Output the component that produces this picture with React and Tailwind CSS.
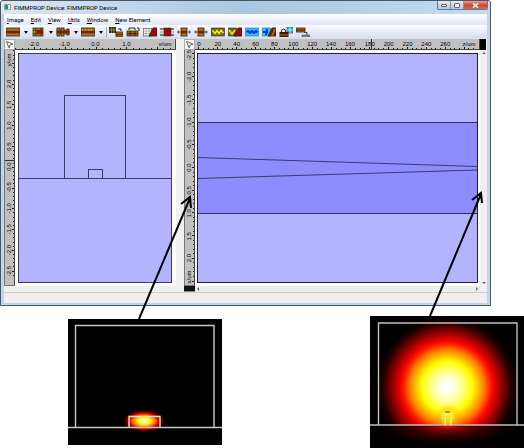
import { MousePointer2 } from "lucide-react";

const MENU = ["Image", "Edit", "View", "Utils", "Window", "New Element"];

const OLIVE = "#8a8418";
const DARK = "#2c2a08";
const WINE = "#980c10";

function Guide({ x = 0, y = 1, w = 14, h = 8 }) {
    return (
        <g>
            <rect x={x} y={y} width={w} height={h} fill={OLIVE} stroke={DARK} strokeWidth="0.8" />
            <rect x={x} y={y + h * 0.35} width={w} height={h * 0.32} fill={WINE} />
        </g>
    );
}

function Wedge({ x = 7 }) {
    return <path d={`M${x} 9 L${x + 4} 1 H14 V9 Z`} fill={WINE} stroke={DARK} strokeWidth="0.9" />;
}

const WITH_MENU = [
    { name: "Straight section", art: <Guide /> },
    {
        name: "Joint",
        art: <g><Guide x={2} w={10} /><path d="M2 5 H6" stroke="#f0e040" /><rect x="6" y="3" width="5" height="4" fill={WINE} /><path d="M10 1 V3 M10 7 V9 M5 2 V8" stroke={DARK} /></g>,
    },
    {
        name: "Periodic section",
        art: <g><Guide x={1} y={3} w={12} h={4} /><Guide x={1} w={3} /><Guide x={5} w={3} /><Guide x={11} y={2} w={2} h={6} /><path d="M1 5 H13" stroke={WINE} strokeWidth="1.6" /></g>,
    },
    {
        name: "Planar section",
        art: <g><Guide /><path d="M1 3 H13" stroke="#f0e040" strokeDasharray="1 2" /></g>,
    },
];

const TOOLS = [
    {
        name: "Copy element",
        art: <g><path d="M0 0 H7 V6 H0 Z" fill={DARK} /><path d="M2.3 0 V6 M4.7 0 V6 M0 3 H7" stroke="#b8ae30" strokeWidth="0.7" /><path d="M9 2 H12 V4" stroke="#222" fill="none" /><Guide x={7} y={5} w={7} h={5} /></g>,
    },
    {
        name: "Swap elements",
        art: <g><Guide x={1} y={4} w={11} h={5} /><path d="M3 3 V1 H9 V3 M11 1 H13 V4" stroke="#222" fill="none" /><path d="M4 4 V9 M9 4 V9" stroke={DARK} /></g>,
    },
    {
        name: "Mesh taper",
        art: <g><rect x="0.5" y="1.5" width="8" height="7.5" fill="#fff" stroke="#555" strokeWidth="0.7" /><path d="M3 1 V9 M6 1 V9 M0 4 H8 M0 6.5 H8" stroke="#888" strokeWidth="0.6" /><Wedge x={6} /></g>,
    },
    {
        name: "Scattering matrix",
        art: <g><rect x="4" y="1" width="7" height="8" fill={WINE} stroke={DARK} strokeWidth="0.6" /><path d="M0 2 H4 M0 8 H4 M11 2 H14 M11 8 H14" stroke="#222" /><path d="M1.5 1 V3 M1.5 7 V9 M12.5 1 V3 M12.5 7 V9 M0 5 H3 M12 5 H14" stroke="#666" strokeWidth="0.8" /></g>,
    },
    {
        name: "Inputs",
        art: <g><Guide x={4} w={6} /><path d="M0 5 H3 M14 5 H11 M1.5 3.5 V6.5 M12.5 3.5 V6.5" stroke="#444" strokeWidth="0.9" /></g>,
    },
    {
        name: "Outputs",
        art: <g><Guide x={4} w={6} /><path d="M0 5 H4 M10 5 H14 M2 3.5 V6.5 M12 3.5 V6.5" stroke="#444" strokeWidth="0.9" /></g>,
    },
    {
        name: "Field plot",
        art: <g><rect x="0.5" y="1" width="13" height="8" fill="#6f6a10" stroke={DARK} strokeWidth="0.6" /><path d="M1.5 3.5 L4 6.5 L6 3.5 L8 6.5 L10 3.5 L12.5 6" stroke="#f8ec28" strokeWidth="1.5" fill="none" /></g>,
    },
    {
        name: "Field plot of taper",
        art: <g><rect x="0.5" y="1" width="8" height="8" fill="#6f6a10" stroke={DARK} strokeWidth="0.6" /><path d="M1 3 L4 7 L7 3" stroke="#f8ec28" strokeWidth="1.5" fill="none" /><Wedge x={6} /></g>,
    },
    {
        name: "Mode profile",
        art: <g><rect x="0.5" y="1" width="13" height="8" fill="#28c8f0" stroke="#207898" strokeWidth="0.6" /><path d="M1.5 5 L3 4 L5 6 L7 4 L9 6 L11 4 L12.5 5.5" stroke="#1428e0" strokeWidth="2" fill="none" /></g>,
    },
    {
        name: "Mode profile of taper",
        art: <g><rect x="0.5" y="1" width="8" height="8" fill="#28c8f0" stroke="#207898" strokeWidth="0.6" /><path d="M1 5 H6 M5 2 L4 8" stroke="#1428e0" strokeWidth="1.8" /><Wedge x={6} /><path d="M10 9 L13 2" stroke={OLIVE} strokeWidth="1.6" /></g>,
    },
    {
        name: "Lock results",
        art: <g><rect x="8" y="0" width="6" height="6" fill="#28b8c8" stroke="#205860" strokeWidth="0.7" /><path d="M8 3 H14 M11 0 V6" stroke="#fff" strokeWidth="0.6" /><path d="M2.5 5 V3.5 Q4.5 0.5 6.5 3.5 V5" stroke="#333" fill="none" strokeWidth="1.1" /><rect x="0.5" y="5" width="9" height="5" fill="#4a1408" /><path d="M1 8 H9" stroke={OLIVE} /></g>,
    },
    {
        name: "Export device",
        art: <g><Guide x={0} y={1} w={9} h={4} /><path d="M8 5.5 H11 V8" stroke="#444" fill="none" /><rect x="6" y="8" width="8" height="2" fill="#888" stroke="#333" strokeWidth="0.4" /></g>,
    },
];

const LEFT_X = {
    ticks: range(26, 1, 6.2),
    labels: [[19, "-2.0"], [50, "-1.0"], [81, "0.0"], [112, "1.0"], [151, "x/um"]],
};
const LEFT_Y = {
    ticks: range(55, 1, 4.17),
    labels: [[10, "y/um"], [34, "2.0"], [55, "1.5"], [76, "1.0"], [97, "0.5"], [117, "0.0"], [138, "-0.5"], [159, "-1.0"], [180, "-1.5"], [201, "-2.0"], [222, "-2.5"]],
};
const RIGHT_X = {
    ticks: range(59, 4, 4.77),
    labels: [
        [4, "0"], [23, "20"], [42, "40"], [61, "60"], [80, "80"], [99, "100"], [118, "120"], [137, "140"],
        [156, "160"], [176, "180"], [195, "200"], [214, "220"], [233, "240"], [252, "260"], [276, "z/um"],
    ],
};
const RIGHT_Y = {
    ticks: range(51, 4, 4.56),
    labels: [[5, "-2.5"], [27, "-2.0"], [50, "-1.5"], [73, "-1.0"], [95, "-0.5"], [118, "0.0"], [141, "0.5"], [164, "1.0"], [187, "1.5"], [209, "2.0"], [228, "x/um"]],
};

function range(count, start, step) {
    return Array.from({ length: count }, (_, i) => start + i * step);
}

const pct = (v, total) => `${(v / total) * 100}%`;

function HRuler({ scale, length, marker, major }) {
    return (
        <div className="h-[11px] min-w-0 border-r border-b border-[#444] bg-[#c0c0c0]">
            <svg className="block h-full w-full overflow-hidden" fontFamily="Liberation Sans, Arial, sans-serif" fontSize="6">
                {scale.ticks.map((t, i) => (
                    <line key={t} x1={pct(t, length)} x2={pct(t, length)} y1={i % major.every === major.offset ? 8 : 9} y2="10" stroke="#222" shapeRendering="crispEdges" />
                ))}
                {scale.labels.map(([at, text]) => (
                    <text key={text} x={pct(at, length)} y="7" textAnchor="middle" fill="#000">{text}</text>
                ))}
                {marker && <line x1={pct(marker, length)} x2={pct(marker, length)} y1="0" y2="10" stroke="#333" shapeRendering="crispEdges" />}
            </svg>
        </div>
    );
}

function VRuler({ scale, length, marker, major }) {
    return (
        <div className="w-[11px] border-r border-b border-l border-[#777] border-r-[#444] bg-[#c0c0c0]">
            <svg className="block h-full w-full overflow-hidden" fontFamily="Liberation Sans, Arial, sans-serif" fontSize="6">
                {scale.ticks.map((t, i) => (
                    <line key={t} y1={pct(t, length)} y2={pct(t, length)} x1={i % major.every === major.offset ? 7 : 8} x2="9" stroke="#222" shapeRendering="crispEdges" />
                ))}
                {scale.labels.map(([at, text]) => (
                    <svg key={text} y={pct(at, length)} overflow="visible">
                        <text transform="translate(6 0) rotate(-90)" textAnchor="middle" fill="#000">{text}</text>
                    </svg>
                ))}
                {marker && <line y1={pct(marker, length)} y2={pct(marker, length)} x1="0" x2="10" stroke="#333" shapeRendering="crispEdges" />}
            </svg>
        </div>
    );
}

function Corner() {
    return (
        <button type="button" aria-label="Select" className="flex items-center justify-center border border-[#aaa] bg-[#f4f4f4]">
            <MousePointer2 size={9} color="#333" strokeWidth={2} />
        </button>
    );
}

function CrossSection() {
    return (
        <svg className="block h-[236px] w-full bg-white" viewBox="0 0 161 236" preserveAspectRatio="none" fill="none" stroke="#3c3c60" shapeRendering="crispEdges">
            <rect x="3.5" y="3.5" width="153" height="229" fill="#b3b3ff" />
            <path d="M3.5 128.5 H156.5 M49.5 128.5 V45.5 H110.5 V128.5 M73.5 128.5 V119.5 H87.5 V128.5" />
        </svg>
    );
}

function TopView() {
    return (
        <svg className="block h-[236px] w-full bg-white" viewBox="0 0 286 236" preserveAspectRatio="none" fill="none" stroke="#303050">
            <g shapeRendering="crispEdges">
                <rect x="2.5" y="3.5" width="281" height="229" fill="#b3b3ff" />
                <rect x="2.5" y="72.5" width="281" height="91" fill="#8c8cff" />
                <rect x="2.5" y="3.5" width="281" height="229" stroke="#202030" />
            </g>
            <path d="M3 107.5 L283.5 116.5 M3 128.5 L283.5 120" strokeWidth="0.9" />
        </svg>
    );
}

function NarrowMode() {
    return (
        <svg className="mt-[3px] block w-[154px]" viewBox="0 0 154 126" role="img" aria-label="Mode at the input end">
            <defs>
                <radialGradient id="narrow">
                    <stop offset="0" stopColor="#ffffe8" />
                    <stop offset="0.15" stopColor="#ffff80" />
                    <stop offset="0.34" stopColor="#ffee00" />
                    <stop offset="0.5" stopColor="#ff8800" />
                    <stop offset="0.66" stopColor="#f01000" />
                    <stop offset="0.82" stopColor="#700000" />
                    <stop offset="1" stopColor="#000" />
                </radialGradient>
            </defs>
            <rect width="154" height="126" fill="#000" />
            <ellipse cx="76" cy="102" rx="21" ry="11" fill="url(#narrow)" />
            <g fill="none" stroke="#c8c8c8" strokeWidth="1.4">
                <path d="M7.5 108 V6.5 H146 V108 M0 108.5 H154" />
                <path d="M61 108 V97.5 H92 V108" stroke="#f0dcc8" />
            </g>
        </svg>
    );
}

function WideMode() {
    return (
        <svg className="block w-[154px]" viewBox="0 0 154 132" role="img" aria-label="Mode at the output end">
            <defs>
                <radialGradient id="wide">
                    <stop offset="0" stopColor="#fff" />
                    <stop offset="0.08" stopColor="#fffff0" />
                    <stop offset="0.22" stopColor="#ffff90" />
                    <stop offset="0.36" stopColor="#ffff00" />
                    <stop offset="0.43" stopColor="#ffc800" />
                    <stop offset="0.53" stopColor="#ff7800" />
                    <stop offset="0.62" stopColor="#ff1400" />
                    <stop offset="0.67" stopColor="#e80000" />
                    <stop offset="0.8" stopColor="#780000" />
                    <stop offset="0.91" stopColor="#200000" />
                    <stop offset="1" stopColor="#000" />
                </radialGradient>
                <radialGradient id="leak">
                    <stop offset="0" stopColor="#e01800" />
                    <stop offset="0.2" stopColor="#900000" />
                    <stop offset="0.55" stopColor="#300000" />
                    <stop offset="1" stopColor="#000" />
                </radialGradient>
                <radialGradient id="foot">
                    <stop offset="0" stopColor="#ffee00" />
                    <stop offset="0.4" stopColor="#ffe000" stopOpacity="0.7" />
                    <stop offset="1" stopColor="#ff9000" stopOpacity="0" />
                </radialGradient>
                <clipPath id="above"><rect width="154" height="109" /></clipPath>
                <clipPath id="below"><rect y="109" width="154" height="23" /></clipPath>
            </defs>
            <rect width="154" height="132" fill="#000" />
            <g clipPath="url(#above)">
                <circle cx="77" cy="71" r="71" fill="url(#wide)" />
                <ellipse cx="78" cy="101" rx="13" ry="13" fill="url(#foot)" />
            </g>
            <ellipse cx="77" cy="109" rx="68" ry="20" fill="url(#leak)" clipPath="url(#below)" />
            <g fill="none" stroke="#c8bcbc" strokeWidth="1.4">
                <path d="M8.5 109 V7 H147 V109 M0 109 H154" />
                <path d="M75 109 V98 H81 V109" stroke="#fff0a0" />
                <path d="M72.5 97 V103 M83 97 V103" stroke="#fff070" strokeWidth="1" />
                <path d="M75 96 H80" stroke="#c86000" />
            </g>
        </svg>
    );
}

function ToolIcon({ children }) {
    return <svg className="h-[10px] w-[14px]" viewBox="0 0 14 10">{children}</svg>;
}

function TitleBar() {
    return (
        <header className="flex h-[13px] items-start bg-linear-to-r from-[#dbe7f4] via-[#a9c6e2] to-[#c3dcf2] pl-[3px]">
            <span className="mt-[3px] mr-[3px] flex h-[6px] w-[7px] border border-[#8aa] bg-white">
                <span className="w-[3px] bg-[#2a8a98]" />
            </span>
            <h1 className="mt-[2px] text-[6px] leading-[9px] text-black">FIMMPROP Device: FIMMPROP Device</h1>
            <div className="mr-[2px] ml-auto flex h-[9px] overflow-hidden rounded-b-[2px] border border-t-0 border-[#65788c]">
                <button type="button" aria-label="Minimize" className="flex w-[13px] items-center justify-center border-r border-[#8194a8] bg-linear-to-b from-[#e4ecf5] to-[#b4c6da]">
                    <span className="h-[3px] w-[6px] rounded-[1px] border border-[#667] bg-white" />
                </button>
                <button type="button" aria-label="Maximize" className="flex w-[13px] items-center justify-center border-r border-[#8194a8] bg-linear-to-b from-[#e4ecf5] to-[#b4c6da]">
                    <span className="h-[5px] w-[6px] rounded-[1px] border border-[#667] bg-white" />
                </button>
                <button type="button" aria-label="Close" className="flex w-[23px] items-center justify-center bg-linear-to-b from-[#e8a090] via-[#cf4a30] to-[#d8684c]">
                    <svg className="h-[5px] w-[7px]" viewBox="0 0 7 5"><path d="M1 0.5 L6 4.5 M6 0.5 L1 4.5" stroke="#fff" strokeWidth="1.5" /></svg>
                </button>
            </div>
        </header>
    );
}

function ScrollArrow({ label, d }) {
    return (
        <button type="button" aria-label={label} className="flex h-[6px] w-[6px] items-center justify-center">
            <svg className="h-[4px] w-[4px]" viewBox="0 0 4 4"><path d={d} fill="#666" /></svg>
        </button>
    );
}

function Toolbar() {
    return (
        <div className="flex h-[14px] items-center bg-linear-to-b from-[#fafbfe] to-[#d6dbee] pl-[2px]">
            {WITH_MENU.map((tool) => (
                <button key={tool.name} type="button" aria-label={tool.name} className="mr-[3px] flex items-center gap-1">
                    <ToolIcon>{tool.art}</ToolIcon>
                    <svg className="h-[3px] w-[4px]" viewBox="0 0 4 3"><path d="M0 0 H4 L2 3 Z" fill="#111" /></svg>
                </button>
            ))}
            <div className="mr-[2px] h-[10px] w-px bg-[#a8a8b8]" />
            <div className="flex gap-[3px]">
                {TOOLS.map((tool) => (
                    <button key={tool.name} type="button" aria-label={tool.name}>
                        <ToolIcon>{tool.art}</ToolIcon>
                    </button>
                ))}
            </div>
        </div>
    );
}

function DeviceWindow() {
    return (
        <section className="mr-[33px] overflow-hidden rounded-t-[3px] border border-[#4a5560] bg-[#b9d7ef]">
            <TitleBar />
            <div className="mx-[3px] mb-[2px] bg-[#f0f0f0]">
                <nav className="flex h-[11px] items-center gap-[7px] bg-linear-to-b from-white to-[#e2e6f4] pl-[3px]">
                    {MENU.map((item) => (
                        <button key={item} type="button" className="text-[6px] leading-[9px] text-black">
                            <span className="underline">{item[0]}</span>{item.slice(1)}
                        </button>
                    ))}
                </nav>
                <Toolbar />
                <main className="flex gap-2">
                    <div className="min-w-0 grow-[172] basis-0">
                        <div className="grid grid-cols-[11px_minmax(0,1fr)]">
                            <Corner />
                            <HRuler scale={LEFT_X} length={161} major={{ every: 5, offset: 3 }} />
                            <VRuler scale={LEFT_Y} length={236} marker={111} major={{ every: 5, offset: 3 }} />
                            <CrossSection />
                        </div>
                    </div>
                    <div className="min-w-0 grow-[303] basis-0">
                        <div className="grid grid-cols-[11px_minmax(0,1fr)_7px]">
                            <Corner />
                            <HRuler scale={RIGHT_X} length={286} marker={178} major={{ every: 4, offset: 0 }} />
                            <div className="mr-px bg-black" />
                            <VRuler scale={RIGHT_Y} length={236} major={{ every: 5, offset: 0 }} />
                            <TopView />
                            <div className="flex flex-col items-center justify-between bg-[#f0f0f0]">
                                <ScrollArrow label="Scroll up" d="M0 3 L2 1 L4 3 Z" />
                                <ScrollArrow label="Scroll down" d="M0 1 L2 3 L4 1 Z" />
                            </div>
                            <div className="h-[6px] border-b border-[#888] bg-[#111]" />
                            <div className="flex justify-between bg-[#ececec]">
                                <ScrollArrow label="Scroll left" d="M3 0 L1 2 L3 4 Z" />
                                <ScrollArrow label="Scroll right" d="M1 0 L3 2 L1 4 Z" />
                            </div>
                        </div>
                    </div>
                </main>
                <footer className="h-[11px] border-t border-[#cfcfcf] bg-[#f1edec]" />
            </div>
        </section>
    );
}

function Arrows() {
    return (
        <svg className="pointer-events-none absolute inset-0 h-full w-full" viewBox="0 0 524 448" preserveAspectRatio="none" fill="none" stroke="#000" strokeWidth="2">
            <path d="M139 319 L190 198 M181 204 L190 197 L191 208" />
            <path d="M430 316 L481 194 M472 200 L481 193 L482 203" />
        </svg>
    );
}

export default function App() {
    return (
        <div className="relative bg-white font-[Roboto,'Noto_Sans',sans-serif]">
            <DeviceWindow />
            <div className="flex items-start justify-between pt-[10px] pl-[68px]">
                <NarrowMode />
                <WideMode />
            </div>
            <Arrows />
        </div>
    );
}
